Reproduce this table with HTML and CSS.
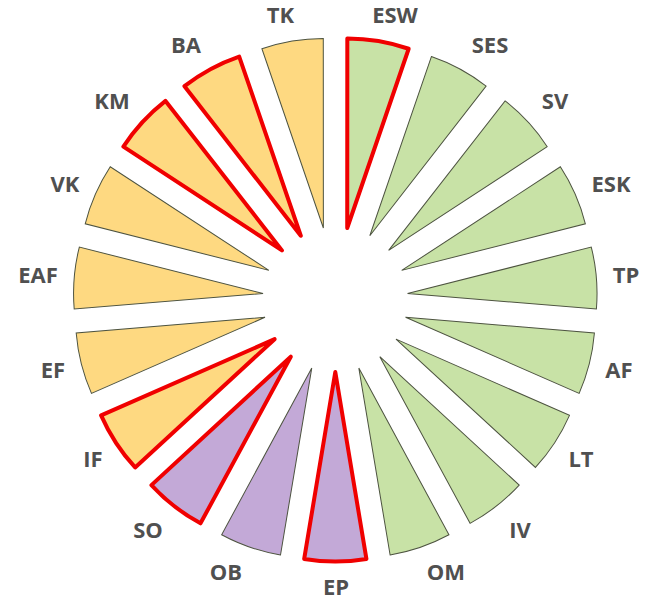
FILE: index.html
```html
<!DOCTYPE html>
<html lang="en">
<head>
<meta charset="utf-8">
<title>Wheel</title>
<link rel="stylesheet" href="styles.css">
</head>
<body>
<svg class="wheel" width="669" height="600" viewBox="0 0 669 600" xmlns="http://www.w3.org/2000/svg" xmlns:xlink="http://www.w3.org/1999/xlink">
  <defs>
    <path id="w" d="M335.3 227 L304.19 40.08 A189.5 189.5 0 0 1 366.41 40.08 Z"/>
  </defs>
  <g class="slices">
    <use href="#w" xlink:href="#w" class="green" transform="rotate(28.421 335.3 299.5)"/>
    <use href="#w" xlink:href="#w" class="green" transform="rotate(47.368 335.3 299.5)"/>
    <use href="#w" xlink:href="#w" class="green" transform="rotate(66.316 335.3 299.5)"/>
    <use href="#w" xlink:href="#w" class="green" transform="rotate(85.263 335.3 299.5)"/>
    <use href="#w" xlink:href="#w" class="green" transform="rotate(104.211 335.3 299.5)"/>
    <use href="#w" xlink:href="#w" class="green" transform="rotate(123.158 335.3 299.5)"/>
    <use href="#w" xlink:href="#w" class="green" transform="rotate(142.105 335.3 299.5)"/>
    <use href="#w" xlink:href="#w" class="green" transform="rotate(161.053 335.3 299.5)"/>
    <use href="#w" xlink:href="#w" class="purple" transform="rotate(198.947 335.3 299.5)"/>
    <use href="#w" xlink:href="#w" class="yellow" transform="rotate(255.789 335.3 299.5)"/>
    <use href="#w" xlink:href="#w" class="yellow" transform="rotate(274.737 335.3 299.5)"/>
    <use href="#w" xlink:href="#w" class="yellow" transform="rotate(293.684 335.3 299.5)"/>
    <use href="#w" xlink:href="#w" class="yellow" transform="rotate(350.526 335.3 299.5)"/>
    <use href="#w" xlink:href="#w" class="green hl" transform="rotate(9.474 335.3 299.5)"/>
    <use href="#w" xlink:href="#w" class="purple hl" transform="rotate(180 335.3 299.5)"/>
    <use href="#w" xlink:href="#w" class="purple hl" transform="rotate(217.895 335.3 299.5)"/>
    <use href="#w" xlink:href="#w" class="yellow hl" transform="rotate(236.842 335.3 299.5)"/>
    <use href="#w" xlink:href="#w" class="yellow hl" transform="rotate(312.632 335.3 299.5)"/>
    <use href="#w" xlink:href="#w" class="yellow hl" transform="rotate(331.579 335.3 299.5)"/>
  </g>
  <g class="labels">
    <text x="280.5" y="23.3">TK</text>
    <text x="395" y="23.3">ESW</text>
    <text x="186" y="53.3">BA</text>
    <text x="490" y="53.3">SES</text>
    <text x="112" y="108.5">KM</text>
    <text x="555" y="108.5">SV</text>
    <text x="65" y="191.7">VK</text>
    <text x="611" y="191.7">ESK</text>
    <text x="38" y="283.3">EAF</text>
    <text x="626" y="283.3">TP</text>
    <text x="53" y="378.3">EF</text>
    <text x="619" y="378.3">AF</text>
    <text x="93" y="466.7">IF</text>
    <text x="581" y="466.7">LT</text>
    <text x="148" y="537.8">SO</text>
    <text x="520" y="537.8">IV</text>
    <text x="226" y="579.5">OB</text>
    <text x="446" y="579.5">OM</text>
    <text x="336" y="594.5">EP</text>
  </g>
</svg>
</body>
</html>
```
FILE: styles.css
```css
html, body {
  margin: 0;
  padding: 0;
  background: #ffffff;
}

.wheel {
  display: block;
}

.slices use {
  stroke: #4d5340;
  stroke-width: 1;
  stroke-linejoin: miter;
}

.slices .green {
  fill: #c8e2a6;
}

.slices .yellow {
  fill: #fed981;
}

.slices .purple {
  fill: #c3a9d7;
}

.slices .hl {
  stroke: #f00000;
  stroke-width: 4;
  stroke-linejoin: round;
}

.labels text {
  font-family: "Open Sans", "Liberation Sans", sans-serif;
  font-weight: 700;
  font-size: 22px;
  fill: #505050;
  text-anchor: middle;
}
```
